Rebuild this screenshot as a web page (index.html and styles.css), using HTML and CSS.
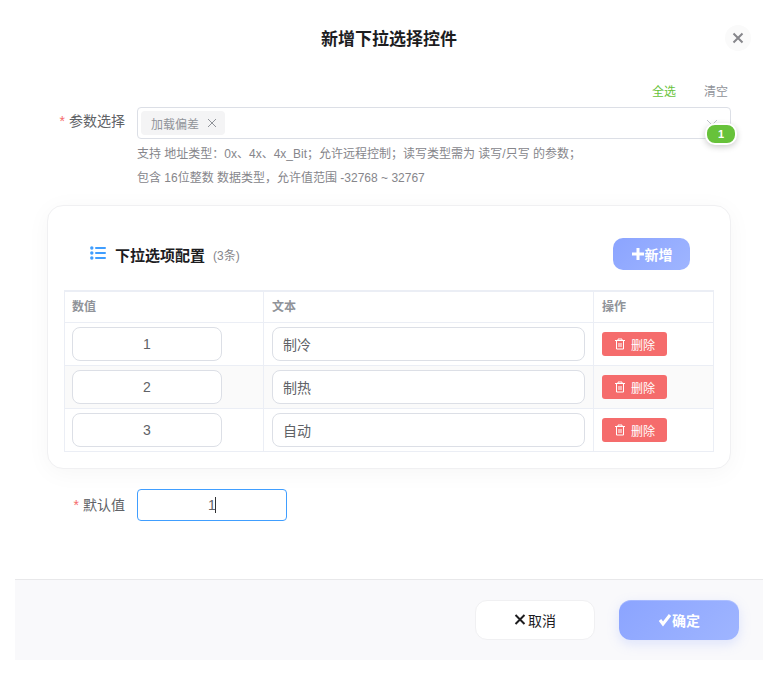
FILE: index.html
```
<!DOCTYPE html>
<html lang="zh-CN">
<head>
    <meta charset="UTF-8">
    <meta name="viewport" content="width=device-width, initial-scale=1.0">
    <title>新增下拉选择控件</title>
    <link rel="stylesheet" href="styles.css">
</head>
<body>
    <form class="dialog">
        <header class="dialog-header">
            <h1 class="dialog-title">新增下拉选择控件</h1>
            <button type="button" class="close" aria-label="关闭">
                <svg width="12" height="12" viewBox="0 0 12 12"><path d="M1.500 1.500l9 9M10.500 1.500l-9 9"/></svg>
            </button>
        </header>

        <main class="dialog-body">
            <div class="select-actions">
                <button type="button" class="text-btn primary">全选</button>
                <button type="button" class="text-btn">清空</button>
            </div>
            <div class="form-item">
                <label class="label label-top" for="param">参数选择</label>
                <div class="content">
                    <div class="select">
                        <span class="tag">加载偏差
                            <button type="button" class="tag-close" aria-label="移除">
                                <svg width="10" height="10" viewBox="0 0 10 10"><path d="M1 1l8 8M9 1l-8 8"/></svg>
                            </button>
                        </span>
                        <input class="select-input" id="param" type="text" readonly>
                        <svg class="arrow" width="12" height="8" viewBox="0 0 12 8"><path d="M1 1l5 5 5-5"/></svg>
                        <span class="badge">1</span>
                    </div>
                    <p class="hint">支持 地址类型：0x、4x、4x_Bit；允许远程控制；读写类型需为 读写/只写 的参数；<br>包含 16位整数 数据类型，允许值范围 -32768 ~ 32767</p>
                </div>
            </div>

            <section class="card">
                <div class="card-header">
                    <svg class="list-icon" width="16" height="16" viewBox="0 0 16 16">
                        <g><circle cx="1.8" cy="2" r="1.7"/><circle cx="1.8" cy="7" r="1.7"/><circle cx="1.8" cy="12" r="1.7"/></g>
                        <path d="M6 2h9M6 7h9M6 12h9"/>
                    </svg>
                    <h2 class="card-title">下拉选项配置</h2>
                    <span class="count">(3条)</span>
                    <button type="button" class="add-btn">
                        <svg width="14" height="14" viewBox="0 0 14 14"><path d="M7 1v12M1 7h12"/></svg>新增
                    </button>
                </div>
                <table class="table">
                    <colgroup>
                        <col class="col-value">
                        <col>
                        <col class="col-action">
                    </colgroup>
                    <thead>
                        <tr><th>数值</th><th>文本</th><th>操作</th></tr>
                    </thead>
                    <tbody>
                        <tr>
                            <td><input class="input number" type="text" value="1" aria-label="数值"></td>
                            <td><input class="input" type="text" value="制冷" aria-label="文本"></td>
                            <td><button type="button" class="delete-btn"><svg width="12" height="12" viewBox="0 0 12 12"><path d="M1 2.5h10M4 2.5V1h4v1.5M2.5 2.5V11h7V2.5M5 5v4M7 5v4"/></svg>删除</button></td>
                        </tr>
                        <tr>
                            <td><input class="input number" type="text" value="2" aria-label="数值"></td>
                            <td><input class="input" type="text" value="制热" aria-label="文本"></td>
                            <td><button type="button" class="delete-btn"><svg width="12" height="12" viewBox="0 0 12 12"><path d="M1 2.5h10M4 2.5V1h4v1.5M2.5 2.5V11h7V2.5M5 5v4M7 5v4"/></svg>删除</button></td>
                        </tr>
                        <tr>
                            <td><input class="input number" type="text" value="3" aria-label="数值"></td>
                            <td><input class="input" type="text" value="自动" aria-label="文本"></td>
                            <td><button type="button" class="delete-btn"><svg width="12" height="12" viewBox="0 0 12 12"><path d="M1 2.5h10M4 2.5V1h4v1.5M2.5 2.5V11h7V2.5M5 5v4M7 5v4"/></svg>删除</button></td>
                        </tr>
                    </tbody>
                </table>
            </section>

            <div class="form-item">
                <label class="label" for="defaultValue">默认值</label>
                <div class="default-box">
                    <input class="input number default" id="defaultValue" type="text" value="1">
                </div>
            </div>
        </main>

        <footer class="dialog-footer">
            <button type="button" class="btn">
                <svg width="12" height="14" viewBox="0 0 12 14"><path d="M1.500 2l9 9M10.500 2l-9 9"/></svg>取消
            </button>
            <button type="submit" class="btn btn-primary">
                <svg width="14" height="14" viewBox="0 0 14 14"><path d="M2 7l3 4 7-9"/></svg>确定
            </button>
        </footer>
    </form>
</body>
</html>
```
FILE: styles.css
```
* {
    box-sizing: border-box;
}
body {
    margin: 0;
    background: #fff;
    color: #606266;
    font-family: "Liberation Sans", "Noto Sans CJK SC", sans-serif;
    font-size: 14px;
}
button, input {
    font: inherit;
    color: inherit;
}
button {
    display: inline-flex;
    align-items: center;
    justify-content: center;
    padding: 0;
    border: none;
    background: none;
    cursor: pointer;
}
svg {
    flex: none;
    fill: none;
    stroke: currentColor;
}
.dialog {
    margin: 0 16px 0 15px;
}
.dialog-header {
    display: grid;
    grid-template-columns: 26px 1fr 26px;
    align-items: start;
    padding: 25px 12px;
}
.dialog-title {
    grid-column: 2;
    margin: 0;
    color: #1d1d1f;
    font-size: 17px;
    line-height: 30px;
    text-align: center;
}
.close {
    width: 26px;
    height: 26px;
    border-radius: 50%;
    background: #fafafa;
    color: #86868b;
}
.close svg {
    stroke-width: 2;
}
.dialog-body {
    padding: 0 32px 40px;
}
.select-actions {
    display: flex;
    justify-content: flex-end;
    gap: 28px;
    padding: 0 3px 3px 0;
}
.text-btn {
    color: #909399;
    font-size: 12px;
    line-height: 24px;
}
.text-btn.primary {
    color: #67c23a;
}
.form-item {
    display: flex;
    align-items: flex-start;
    margin-bottom: 18px;
}
.label {
    flex: none;
    width: 90px;
    padding-right: 12px;
    line-height: 32px;
    text-align: right;
}
.label-top {
    line-height: 28px;
}
.label::before {
    content: "*";
    margin-right: 4px;
    color: #f56c6c;
}
.content {
    flex: 1;
}
.select {
    position: relative;
    display: flex;
    align-items: center;
    height: 32px;
    padding: 0 12px 0 3px;
    border: 1px solid #dcdfe6;
    border-radius: 4px;
}
.tag {
    display: flex;
    align-items: center;
    gap: 8px;
    height: 24px;
    padding: 0 8px 0 10px;
    border-radius: 4px;
    background: #f4f4f5;
    color: #909399;
    font-size: 12px;
}
.tag-close svg {
    stroke-width: 1;
}
.select-input {
    flex: 1;
    min-width: 0;
    border: none;
    outline: none;
}
.arrow {
    color: #c0c4cc;
}
.badge {
    position: absolute;
    right: -7px;
    bottom: -7px;
    width: 32px;
    border: 2px solid #fff;
    border-radius: 10px;
    background: #67c23a;
    box-shadow: 0 2px 6px rgba(0, 0, 0, 0.2);
    color: #fff;
    font-size: 11px;
    font-weight: bold;
    line-height: 18px;
    text-align: center;
}
.hint {
    margin: 3px 0 0;
    color: #86868b;
    font-size: 12px;
    line-height: 24px;
}
.card {
    margin: -3px 0 20px;
    padding: 16px;
    border: 1px solid #f0f0f2;
    border-radius: 16px;
    background: #fff;
    box-shadow: 0 4px 24px rgba(0, 0, 0, 0.04);
}
.card-header {
    display: flex;
    align-items: center;
    padding: 16px 24px 20px 26px;
}
.list-icon {
    margin-right: 9px;
    color: #409eff;
    stroke-width: 2;
    stroke-linecap: round;
}
.list-icon g {
    fill: currentColor;
    stroke: none;
}
.card-title {
    margin: 0 8px 0 0;
    color: #1d1d1f;
    font-size: 15px;
}
.count {
    color: #86868b;
    font-size: 12px;
}
.add-btn {
    width: 77px;
    height: 32px;
    margin-left: auto;
    border-radius: 10px;
    background: linear-gradient(135deg, #8ba4ff, #9fb5ff);
    color: #fff;
    font-weight: bold;
}
.add-btn svg {
    stroke-width: 3;
}
.table {
    width: 100%;
    border: 1px solid #ebeef5;
    border-top-width: 2px;
    border-right: none;
    border-bottom: none;
    border-spacing: 0;
    table-layout: fixed;
}
.col-value {
    width: 199px;
}
.col-action {
    width: 120px;
}
.table th, .table td {
    border-right: 1px solid #ebeef5;
    border-bottom: 1px solid #ebeef5;
    text-align: left;
}
.table th {
    padding: 0 8px;
    color: #909399;
    font-size: 12px;
    line-height: 30px;
}
.table td {
    padding: 4px 8px;
}
.table td:first-child, .table th:first-child {
    padding-left: 7px;
}
.table tbody tr:nth-child(even) {
    background: #fafafa;
}
.input {
    display: block;
    width: 100%;
    height: 34px;
    padding: 0 10px;
    border: 1px solid #dcdfe6;
    border-radius: 8px;
    outline: none;
    background: #fff;
}
.number {
    width: 150px;
    text-align: center;
}
.delete-btn {
    gap: 5px;
    width: 65px;
    height: 24px;
    border-radius: 3px;
    background: #f56c6c;
    color: #fff;
    font-size: 12px;
    vertical-align: middle;
}
.default-box {
    position: relative;
}
.default {
    height: 32px;
    border-color: #409eff;
    border-radius: 4px;
}
/* text cursor of the focused field */
.default-box::after {
    content: "";
    position: absolute;
    top: 8px;
    left: calc(50% + 3px);
    width: 1px;
    height: 16px;
    background: #303133;
}
.dialog-footer {
    display: flex;
    justify-content: flex-end;
    gap: 24px;
    padding: 20px 24px;
    border-top: 1px solid #e8e8ea;
    background: #f9f9fb;
}
.btn {
    width: 120px;
    height: 40px;
    gap: 2px;
    border: 1px solid #f0f0f2;
    border-radius: 12px;
    background: #fff;
    color: #1d1d1f;
}
.btn svg {
    stroke-width: 2;
}
.btn-primary {
    gap: 0;
    border: none;
    background: linear-gradient(135deg, #8ba4ff, #9fb5ff);
    box-shadow: 0 4px 12px rgba(139, 164, 255, 0.25), inset 0 1px 0 rgba(255, 255, 255, 0.2);
    color: #fff;
    font-weight: bold;
}
.btn-primary svg {
    stroke-width: 3;
}
```
